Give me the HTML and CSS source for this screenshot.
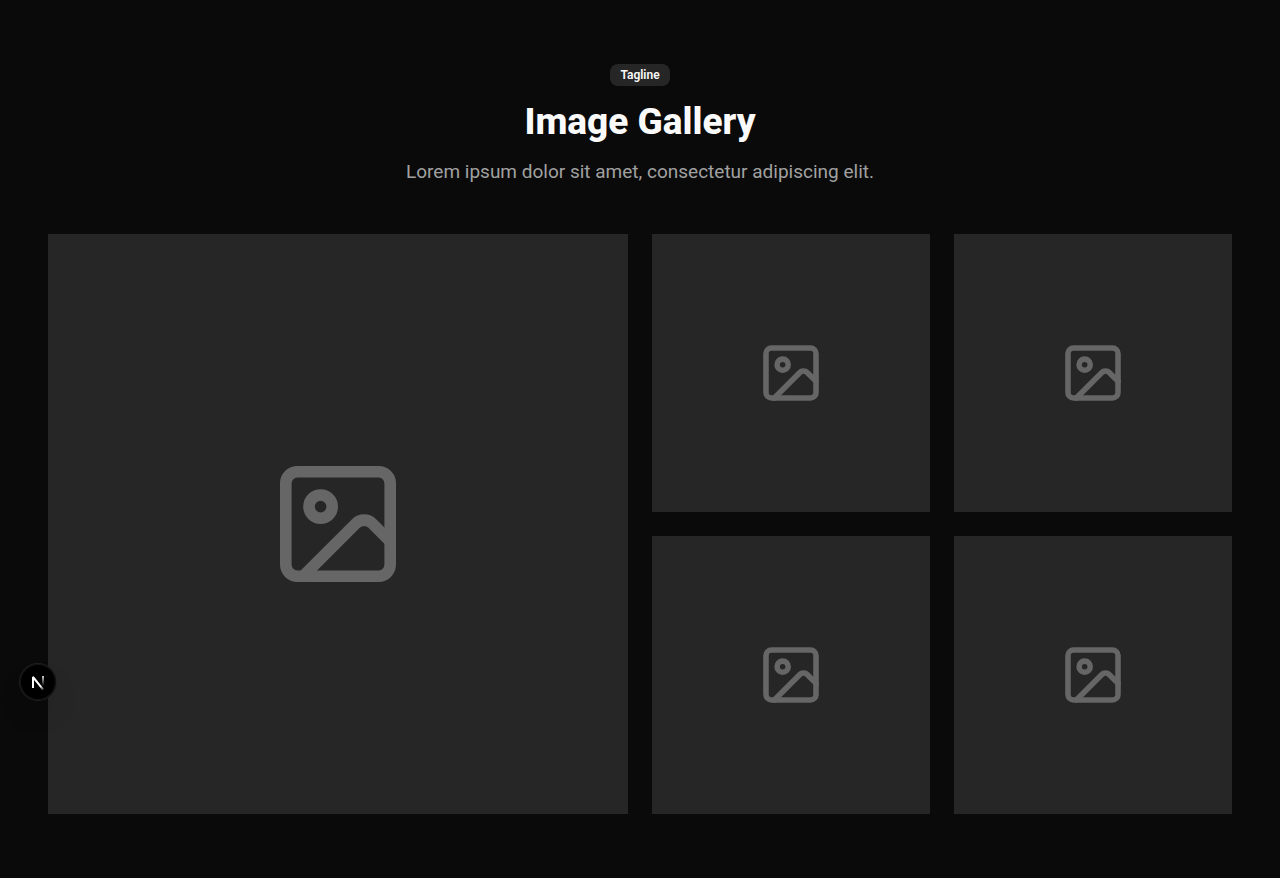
FILE: index.html
```html
<!DOCTYPE html>
<html lang="en">
<head>
<meta charset="utf-8">
<meta name="viewport" content="width=device-width, initial-scale=1">
<title>Image Gallery</title>
<link rel="stylesheet" href="styles.css">
</head>
<body>
<svg class="sprite" aria-hidden="true">
  <symbol id="picture" viewBox="-38 -38 100 100">
    <g fill="none" stroke="currentColor" stroke-width="2" stroke-linecap="round" stroke-linejoin="round">
      <rect x="3" y="3" width="18" height="18" rx="2"/>
      <circle cx="9" cy="9" r="2"/>
      <path d="m21 15-3.086-3.086a2 2 0 0 0-2.828 0L6 21"/>
    </g>
  </symbol>
</svg>
<main class="section">
  <header class="intro">
    <span class="badge">Tagline</span>
    <h1 class="title">Image Gallery</h1>
    <p class="subtitle">Lorem ipsum dolor sit amet, consectetur adipiscing elit.</p>
  </header>
  <div class="gallery">
    <div class="tile tile-large"><svg class="tile-icon" role="img" aria-label="Image placeholder"><use href="#picture"/></svg></div>
    <div class="tile"><svg class="tile-icon" role="img" aria-label="Image placeholder"><use href="#picture"/></svg></div>
    <div class="tile"><svg class="tile-icon" role="img" aria-label="Image placeholder"><use href="#picture"/></svg></div>
    <div class="tile"><svg class="tile-icon" role="img" aria-label="Image placeholder"><use href="#picture"/></svg></div>
    <div class="tile"><svg class="tile-icon" role="img" aria-label="Image placeholder"><use href="#picture"/></svg></div>
  </div>
</main>
<button class="devtools" type="button" aria-label="Open developer tools">
  <svg class="devtools-logo" viewBox="0 0 36 36" fill="none" aria-hidden="true">
    <defs>
      <linearGradient id="diagonal" x1="19" y1="19" x2="24" y2="26" gradientUnits="userSpaceOnUse">
        <stop stop-color="#fff"/><stop offset="0.4" stop-color="#fff"/><stop offset="1" stop-color="#fff" stop-opacity="0.1"/>
      </linearGradient>
      <linearGradient id="stem" x1="23" y1="12" x2="23" y2="22" gradientUnits="userSpaceOnUse">
        <stop stop-color="#fff"/><stop offset="1" stop-color="#fff" stop-opacity="0"/>
      </linearGradient>
    </defs>
    <path d="M13 24V13L23.2 25.6" stroke="url(#diagonal)" stroke-width="2" stroke-linejoin="bevel"/>
    <path d="M23 12V22" stroke="url(#stem)" stroke-width="1.6"/>
  </svg>
</button>
</body>
</html>
```
FILE: styles.css
```css
* {
  box-sizing: border-box;
}

body {
  margin: 0;
  background: #0a0a0a;
  color: #fafafa;
  font-family: Roboto, "Liberation Sans", sans-serif;
}

.sprite {
  position: absolute;
  width: 0;
  height: 0;
}

.section {
  display: flex;
  flex-direction: column;
  gap: 48px;
  padding: 64px 48px;
}

.intro {
  display: flex;
  flex-direction: column;
  align-items: center;
  gap: 16px;
  text-align: center;
}

.badge {
  padding: 3px 10px;
  border-radius: 8px;
  background: #262626;
  font-size: 12px;
  line-height: 16px;
  font-weight: 600;
}

.title {
  margin: 0;
  font-size: 37px;
  line-height: 40px;
  font-weight: 800;
}

.subtitle {
  margin: 0;
  color: #a1a1a1;
  font-size: 19px;
  line-height: 28px;
}

.gallery {
  display: grid;
  grid-template-columns: repeat(4, 1fr);
  gap: 24px;
}

.tile {
  aspect-ratio: 1;
  background: #262626;
  color: #666;
}

.tile-large {
  grid-column: span 2;
  grid-row: span 2;
}

.tile-icon {
  display: block;
  width: 100%;
  height: 100%;
}

.devtools {
  position: fixed;
  left: 20px;
  bottom: 178px;
  display: flex;
  align-items: center;
  justify-content: center;
  width: 36px;
  height: 36px;
  padding: 0;
  border: 0;
  border-radius: 50%;
  background: #000;
  box-shadow: 0 0 0 1px #202020, inset 0 0 0 1px #151515, 0 16px 32px -8px rgba(0, 0, 0, 0.24);
}

.devtools-logo {
  width: 36px;
  height: 36px;
}
```
